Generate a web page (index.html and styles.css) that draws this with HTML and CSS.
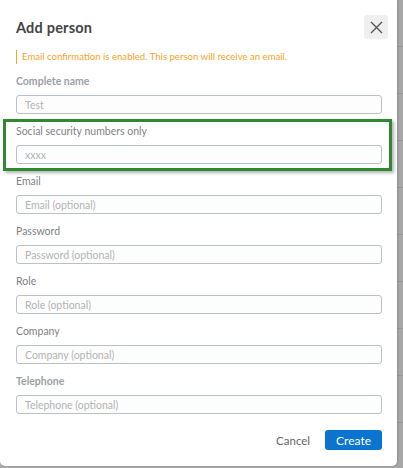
FILE: index.html
```html
<!DOCTYPE html>
<html>
<head>
<meta charset="utf-8">
<link rel="stylesheet" href="styles.css">
</head>
<body>
<div class="modal">
  <div class="header">
    <h1 class="title">Add person</h1>
    <button class="close" aria-label="Close">
      <svg width="13" height="13" viewBox="0 0 13 13"><path d="M1 1 L12 12 M12 1 L1 12" stroke="#555" stroke-width="1.4" fill="none"/></svg>
    </button>
  </div>
  <div class="warning">Email confirmation is enabled. This person will receive an email.</div>
  <div class="form">
    <div class="field">
      <label class="label strong">Complete name</label>
      <input class="input" placeholder="Test">
    </div>
    <div class="field highlight">
      <label class="label">Social security numbers only</label>
      <input class="input" placeholder="xxxx">
    </div>
    <div class="field">
      <label class="label">Email</label>
      <input class="input" placeholder="Email (optional)">
    </div>
    <div class="field">
      <label class="label">Password</label>
      <input class="input" placeholder="Password (optional)">
    </div>
    <div class="field">
      <label class="label">Role</label>
      <input class="input" placeholder="Role (optional)">
    </div>
    <div class="field">
      <label class="label">Company</label>
      <input class="input" placeholder="Company (optional)">
    </div>
    <div class="field">
      <label class="label strong">Telephone</label>
      <input class="input" placeholder="Telephone (optional)">
    </div>
  </div>
  <div class="footer">
    <button class="btn-cancel">Cancel</button>
    <button class="btn-create">Create</button>
  </div>
</div>
</body>
</html>
```
FILE: styles.css
```css
html, body {
  margin: 0;
  padding: 0;
  height: 100%;
  overflow: hidden;
}
body {
  background-color: #a7a7a7;
  background-image: repeating-linear-gradient(to bottom, transparent 0, transparent 46px, #979797 46px, #979797 47px);
  font-family: Lato, "Open Sans", sans-serif;
}
.modal {
  width: 397px;
  height: 470px;
  margin-top: -4px;
  background: #fff;
  border-radius: 5px;
  box-shadow: 1px 0 2px rgba(0,0,0,0.15);
  display: flex;
  flex-direction: column;
  box-sizing: border-box;
  padding-top: 4px;
}
.header {
  display: flex;
  align-items: center;
  justify-content: space-between;
  padding: 15px 9px 0 16px;
}
.title {
  margin: 0;
  font-size: 14.5px;
  font-weight: 700;
  color: #444;
  letter-spacing: 0.2px;
}
.close {
  width: 24px;
  height: 24px;
  border: none;
  border-radius: 3px;
  background: #efefef;
  padding: 0;
  display: flex;
  align-items: center;
  justify-content: center;
}
.warning {
  margin: 11px 0 0 16px;
  border-left: 1px solid #f5a623;
  padding-left: 5px;
  height: 14px;
  line-height: 14px;
  font-size: 9.6px;
  color: #f5a32a;
}
.form {
  display: flex;
  flex-direction: column;
  gap: 10px;
  margin: 10px 15px 0 16px;
}
.field {
  display: flex;
  flex-direction: column;
  gap: 7px;
}
.field.highlight {
  margin: -5px -10px -7px -13px;
  padding: 2px 7px 4px 10px;
  border: 3px solid #2f8a2f;
  box-shadow: 2px 2px 3px rgba(0,0,0,0.3);
}
.label {
  font-size: 10.5px;
  line-height: 14px;
  color: #7d8285;
}
.label.strong {
  font-weight: 700;
  color: #9aa1a5;
}
.input {
  box-sizing: border-box;
  height: 19px;
  width: 100%;
  border: 1px solid #b9c0c6;
  border-radius: 3px;
  background: #fdfdfd;
  padding: 0 8px;
  font-family: Lato, "Open Sans", sans-serif;
  font-size: 10.5px;
  color: #444;
}
.input::placeholder {
  color: #b3b3b3;
}
.footer {
  display: flex;
  justify-content: flex-end;
  align-items: center;
  gap: 15px;
  margin: 16px 15px 0 16px;
}
.btn-cancel {
  border: none;
  background: none;
  padding: 0;
  font-family: Lato, "Open Sans", sans-serif;
  font-size: 11.5px;
  color: #666;
}
.btn-create {
  height: 20px;
  border: none;
  border-radius: 3px;
  background: #0b74cf;
  color: #fff;
  padding: 0 11px;
  font-family: Lato, "Open Sans", sans-serif;
  font-size: 12px;
}
```
